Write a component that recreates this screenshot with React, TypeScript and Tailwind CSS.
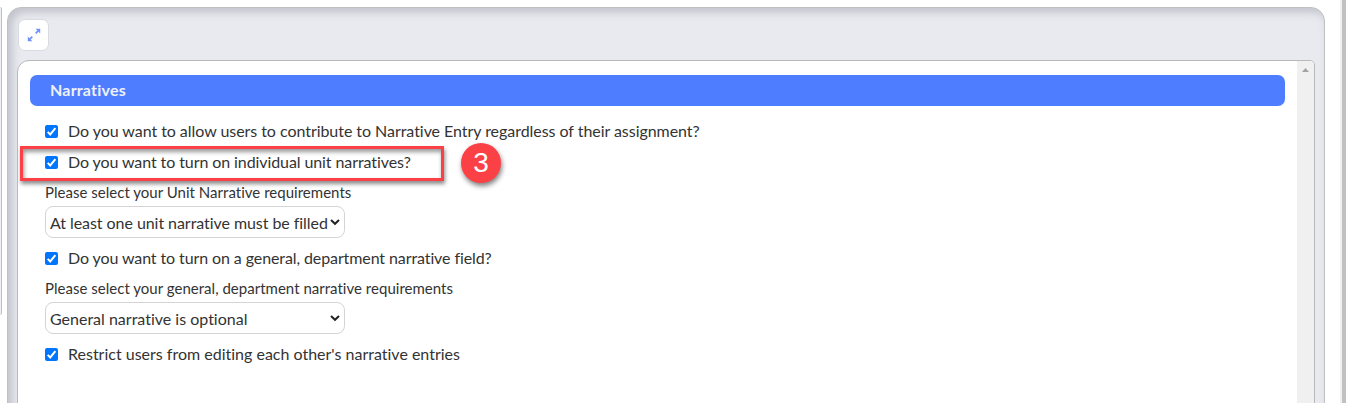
import type { ReactNode } from 'react';

function CheckRow({ label, tracking = '', children }: { label: string; tracking?: string; children?: ReactNode }) {
  return (
    <div className="relative flex h-[31px] items-center gap-[10px]">
      <span className="flex size-[13px] shrink-0 items-center justify-center rounded-[2px] bg-[#0075ff]">
        <svg viewBox="0 0 13 13" className="size-[13px]" fill="none" stroke="#fff" strokeWidth="2">
          <path d="M2.7 6.9 5.2 9.4 10.4 3.2" />
        </svg>
      </span>
      <span className={`whitespace-nowrap pb-[2px] text-[16px] leading-[20px] ${tracking}`}>{label}</span>
      {children}
    </div>
  );
}

function SelectField({ label, value, tracking = '' }: { label: string; value: string; tracking?: string }) {
  return (
    <div className="mb-[5px]">
      <div className="flex h-7 items-center whitespace-nowrap text-[15px] tracking-[0.02px]">{label}</div>
      <div className="flex h-8 w-[300px] items-center justify-between rounded-[8px] border border-[#d4d4d4] bg-white pl-1 pr-[4px] pt-[2px]">
        <span className={`whitespace-nowrap text-[16px] ${tracking}`}>{value}</span>
        <svg viewBox="0 0 10 8" className="mb-[2px] h-2 w-[10px] shrink-0" fill="none" stroke="#222" strokeWidth="2">
          <path d="M1 2 5 5.8 9 2" />
        </svg>
      </div>
    </div>
  );
}

function Callout() {
  return (
    <>
      <div className="absolute left-[-25px] top-[-1px] h-[35px] w-[424px] border-[3px] border-[#fb4145] shadow-[1px_3px_4px_rgba(0,0,0,0.45),inset_1px_3px_4px_rgba(0,0,0,0.4)]" />
      <div className="absolute left-[416px] top-[-4px] flex size-10 items-center justify-center rounded-full bg-[#fb4145] font-['Liberation_Sans',sans-serif] text-[28px] leading-none text-white shadow-[1px_3px_5px_rgba(0,0,0,0.5)]">
        3
      </div>
    </>
  );
}

export default function App() {
  return (
    <div className="flex h-[403px] w-[1346px] overflow-hidden bg-white font-[Lato,sans-serif] text-[#333] [font-variant-ligatures:none]">
      <div className="mt-[7px] h-[308px] w-[2px] shrink-0 rounded-r-[4px] border-r border-[#bfc0c5] bg-[#eef0f3]" />

      <main className="ml-[5px] mt-[7px] flex h-[420px] w-[1318px] shrink-0 flex-col rounded-t-[14px] border border-[#c0c0c2] bg-[#e8eaef] px-[9px] shadow-[inset_4px_4px_8px_rgba(100,100,115,0.3)]">
        <div className="h-[52px] shrink-0 pl-[1px] pt-[11px]">
          <button className="flex h-8 w-[31px] items-center justify-center rounded-[7px] border border-[#d9dbe2] bg-white">
            <svg viewBox="0 0 14 14" className="size-[14px]" fill="#6f92fc" stroke="#6f92fc">
              <path stroke="none" d="M8.6 0.8H13.2v4.6zM0.8 8.6V13.2h4.6z" />
              <path strokeWidth="1.8" d="M8.7 5.3 11.4 2.6M5.3 8.7 2.6 11.4" />
            </svg>
          </button>
        </div>

        <section className="flex min-h-0 flex-1 overflow-hidden rounded-tl-[12px] rounded-tr-[5px] border border-[#b9b9b9] bg-white">
          <div className="flex-1 pl-3 pr-3 pt-[14px]">
            <h2 className="flex h-[31px] items-center rounded-[7px] bg-[#4e7eff] pb-[2px] pl-5 text-[16px] font-bold tracking-[0.2px] text-[#eef1fa]">
              Narratives
            </h2>
            <div className="pl-[15px] pt-[10px]">
              <CheckRow
                label="Do you want to allow users to contribute to Narrative Entry regardless of their assignment?"
                tracking="tracking-[-0.045px]"
              />
              <CheckRow label="Do you want to turn on individual unit narratives?" tracking="tracking-[-0.09px]">
                <Callout />
              </CheckRow>
              <SelectField
                label="Please select your Unit Narrative requirements"
                value="At least one unit narrative must be filled"
                tracking="tracking-[-0.06px]"
              />
              <CheckRow
                label="Do you want to turn on a general, department narrative field?"
                tracking="tracking-[-0.1px]"
              />
              <SelectField
                label="Please select your general, department narrative requirements"
                value="General narrative is optional"
              />
              <CheckRow label="Restrict users from editing each other's narrative entries" />
            </div>
          </div>
          <div className="flex w-[17px] justify-center bg-[#f0f0f0] pt-[7px]">
            <svg viewBox="0 0 7 4" className="h-1 w-[7px]" fill="#a3a3a3">
              <path d="M0 4 3.5 0 7 4z" />
            </svg>
          </div>
        </section>
      </main>

      <div className="ml-auto w-[6px] border-l-2 border-[#f0f0f0] bg-[#c1c1c1]" />
    </div>
  );
}
